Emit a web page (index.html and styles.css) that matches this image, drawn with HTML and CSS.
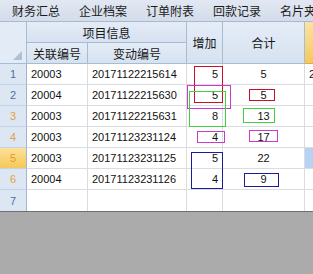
FILE: index.html
```html
<!DOCTYPE html>
<html lang="zh-CN">
<head>
    <meta charset="UTF-8">
    <meta name="viewport" content="width=device-width, initial-scale=1.0">
    <title>订单附表</title>
    <link rel="stylesheet" href="styles.css">
</head>
<body>
    <div class="tabs">
        <span class="tab">财务汇总</span>
        <span class="tab">企业档案</span>
        <span class="tab">订单附表</span>
        <span class="tab">回款记录</span>
        <span class="tab">名片夹</span>
    </div>

    <div class="sheet">
        <table class="grid">
            <colgroup>
                <col class="c-rh">
                <col class="c-1">
                <col class="c-2">
                <col class="c-3">
                <col class="c-4">
                <col class="c-5">
            </colgroup>
            <thead>
                <tr>
                    <th class="corner" rowspan="2"><span class="tri"></span></th>
                    <th colspan="2">项目信息</th>
                    <th rowspan="2">增加</th>
                    <th rowspan="2">合计</th>
                    <th class="sel-col" rowspan="2"></th>
                </tr>
                <tr>
                    <th>关联编号</th>
                    <th>变动编号</th>
                </tr>
            </thead>
            <tbody>
                <tr>
                    <td class="rh">1</td>
                    <td>20003</td>
                    <td>20171122215614</td>
                    <td class="num">5</td>
                    <td class="mid">5</td>
                    <td>2017-11-22</td>
                </tr>
                <tr>
                    <td class="rh">2</td>
                    <td>20004</td>
                    <td>20171122215630</td>
                    <td class="num">5</td>
                    <td class="mid">5</td>
                    <td></td>
                </tr>
                <tr>
                    <td class="rh warm">3</td>
                    <td>20003</td>
                    <td>20171122215631</td>
                    <td class="num">8</td>
                    <td class="mid">13</td>
                    <td></td>
                </tr>
                <tr>
                    <td class="rh warm">4</td>
                    <td>20003</td>
                    <td>20171123231124</td>
                    <td class="num">4</td>
                    <td class="mid">17</td>
                    <td></td>
                </tr>
                <tr>
                    <td class="rh active">5</td>
                    <td>20003</td>
                    <td>20171123231125</td>
                    <td class="num">5</td>
                    <td class="mid">22</td>
                    <td class="picked"></td>
                </tr>
                <tr>
                    <td class="rh warm">6</td>
                    <td>20004</td>
                    <td>20171123231126</td>
                    <td class="num">4</td>
                    <td class="mid">9</td>
                    <td></td>
                </tr>
                <tr class="last">
                    <td class="rh">7</td>
                    <td></td>
                    <td></td>
                    <td></td>
                    <td></td>
                    <td></td>
                </tr>
            </tbody>
        </table>

        <!-- marker boxes drawn over the cells -->
        <div class="mark red" style="left:194px;top:44px;width:29px;height:37px"></div>
        <div class="mark magenta" style="left:187px;top:63px;width:44px;height:24px"></div>
        <div class="mark green" style="left:189px;top:69px;width:37px;height:36px"></div>
        <div class="mark red" style="left:249px;top:67px;width:26px;height:12px"></div>
        <div class="mark green" style="left:243px;top:86px;width:32px;height:15px"></div>
        <div class="mark magenta" style="left:197px;top:109px;width:28px;height:12px"></div>
        <div class="mark magenta" style="left:249px;top:108px;width:29px;height:12px"></div>
        <div class="mark navy" style="left:191px;top:130px;width:32px;height:37px"></div>
        <div class="mark navy" style="left:244px;top:151px;width:35px;height:14px"></div>
    </div>
</body>
</html>
```

FILE: styles.css
```css
body {
    margin: 0;
    width: 313px;
    height: 274px;
    overflow: hidden;
    background-color: #ababab;
    font-family: "Liberation Sans", "Noto Sans CJK SC", sans-serif;
    color: #111;
}
.tabs {
    display: flex;
    height: 21px;
    background: linear-gradient(#e2e8f2, #d3dcea);
    border-bottom: 1px solid #a9b8cc;
    white-space: nowrap;
    overflow: hidden;
}
.tab {
    flex: none;
    width: 67px;
    padding-left: 12px;
    box-sizing: border-box;
    font-family: "Noto Sans CJK SC", sans-serif;
    font-size: 12px;
    line-height: 21px;
    color: #1b1b1b;
}
.sheet {
    position: relative;
    width: 313px;
    overflow: hidden;
    background-color: #fff;
    border-bottom: 1px solid #6f6f6f;
}
.grid {
    table-layout: fixed;
    border-collapse: separate;
    border-spacing: 0;
    width: 365px;
}
.c-rh { width: 27px; }
.c-1 { width: 61px; }
.c-2 { width: 99px; }
.c-3 { width: 36px; }
.c-4 { width: 82px; }
.c-5 { width: 60px; }
th, td {
    box-sizing: border-box;
    height: 21px;
    padding: 0;
    white-space: nowrap;
    overflow: hidden;
}
th {
    background: linear-gradient(#e4ecf7, #d7e2f0);
    border-right: 1px solid #a6bcd5;
    border-bottom: 1px solid #a6bcd5;
    font-family: "Noto Sans CJK SC", sans-serif;
    font-size: 12px;
    font-weight: normal;
    color: #161616;
    text-align: center;
}
th.corner {
    position: relative;
    background: #e3ebf6;
}
.tri {
    position: absolute;
    right: 4px;
    bottom: 3px;
    width: 0;
    height: 0;
    border-left: 9px solid transparent;
    border-bottom: 9px solid #b3bfce;
}
th.sel-col {
    background: linear-gradient(#fbe3a3, #f5c85c);
    border-bottom: 1px solid #e2a93a;
}
td {
    border-right: 1px solid #dadcdf;
    border-bottom: 1px solid #dadcdf;
    font-size: 11px;
    padding-left: 4px;
    color: #111;
}
td.rh {
    padding: 0;
    background: #dde7f4;
    border-right: 1px solid #9eb6ce;
    border-bottom: 1px solid #c3d3e6;
    text-align: center;
    color: #51709a;
}
td.rh.warm {
    color: #e3a23a;
}
td.rh.active {
    background: linear-gradient(#fbe19a, #f6c857);
    color: #e89a2a;
}
td.num {
    padding: 0 4px 0 0;
    text-align: right;
}
td.mid {
    padding: 0;
    text-align: center;
}
td.picked {
    background: #b6d3f6;
}
.last td {
    border-bottom: none;
}
.mark {
    position: absolute;
    box-sizing: border-box;
    border: 1px solid;
}
.red { border-color: #c8102e; }
.magenta { border-color: #c93cc9; }
.green { border-color: #3fcf3f; }
.navy { border-color: #1c1c96; }
```
